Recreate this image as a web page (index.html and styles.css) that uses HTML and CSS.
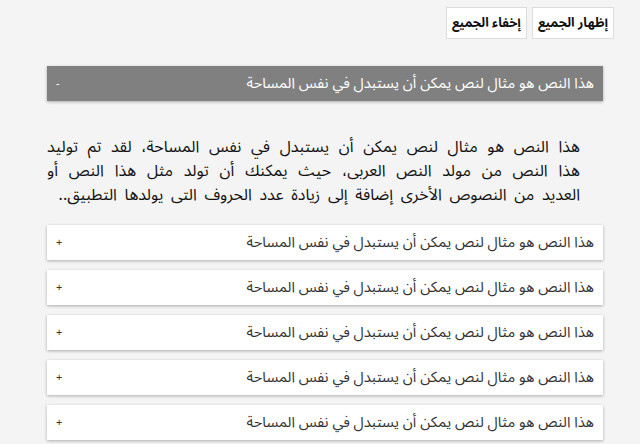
FILE: index.html
```html
<!DOCTYPE html>
<html lang="ar" dir="rtl">
<head>
<meta charset="UTF-8">
<meta name="viewport" content="width=device-width, initial-scale=1.0">
<title>Accordion</title>
<link rel="stylesheet" href="styles.css">
</head>
<body>

<div class="page">
  <div class="toolbar">
    <button class="btn">إظهار الجميع</button>
    <button class="btn">إخفاء الجميع</button>
  </div>

  <div class="accordion">
    <div class="acc-item open">
      <div class="acc-head">
        <span>هذا النص هو مثال لنص يمكن أن يستبدل في نفس المساحة</span>
        <span class="sign">-</span>
      </div>
      <div class="acc-body">
        <p>هذا النص هو مثال لنص يمكن أن يستبدل في نفس المساحة، لقد تم توليد هذا النص من مولد النص العربى، حيث يمكنك أن تولد مثل هذا النص أو العديد من النصوص الأخرى إضافة إلى زيادة عدد الحروف التى يولدها التطبيق..</p>
      </div>
    </div>
    <div class="acc-item">
      <div class="acc-head">
        <span>هذا النص هو مثال لنص يمكن أن يستبدل في نفس المساحة</span>
        <span class="sign">+</span>
      </div>
    </div>
    <div class="acc-item">
      <div class="acc-head">
        <span>هذا النص هو مثال لنص يمكن أن يستبدل في نفس المساحة</span>
        <span class="sign">+</span>
      </div>
    </div>
    <div class="acc-item">
      <div class="acc-head">
        <span>هذا النص هو مثال لنص يمكن أن يستبدل في نفس المساحة</span>
        <span class="sign">+</span>
      </div>
    </div>
    <div class="acc-item">
      <div class="acc-head">
        <span>هذا النص هو مثال لنص يمكن أن يستبدل في نفس المساحة</span>
        <span class="sign">+</span>
      </div>
    </div>
    <div class="acc-item">
      <div class="acc-head">
        <span>هذا النص هو مثال لنص يمكن أن يستبدل في نفس المساحة</span>
        <span class="sign">+</span>
      </div>
    </div>
  </div>
</div>

</body>
</html>
```

FILE: styles.css
```css
html, body {
  margin: 0;
  background: #f4f4f4;
  font-family: "Noto Sans Arabic", "DejaVu Sans", sans-serif;
  color: #222;
}
.page {
  padding: 7px 26px 0 37px;
}
.toolbar {
  display: flex;
  gap: 5px;
  margin-bottom: 27px;
}
.btn {
  height: 32px;
  padding: 0 5px;
  background: #fff;
  border: 1px solid #ddd;
  font-family: inherit;
  font-size: 13px;
  font-weight: bold;
  color: #111;
}
.accordion {
  margin-left: 10px;
  margin-right: 11px;
}
.acc-item {
  margin-bottom: 10px;
}
.acc-head {
  height: 35px;
  display: flex;
  justify-content: space-between;
  align-items: center;
  padding: 0 9px;
  background: #fff;
  font-size: 14.7px;
  color: #333;
  box-shadow: 0 1px 3px rgba(0, 0, 0, 0.3);
}
.open .acc-head {
  background: #808080;
  color: #fff;
}
.sign {
  font-size: 11px;
}
.acc-body {
  padding: 34px 23px 8px 0;
}
.acc-body p {
  margin: 0;
  font-size: 16px;
  line-height: 24px;
  word-spacing: 3.5px;
  text-align: justify;
  color: #111;
}
```
